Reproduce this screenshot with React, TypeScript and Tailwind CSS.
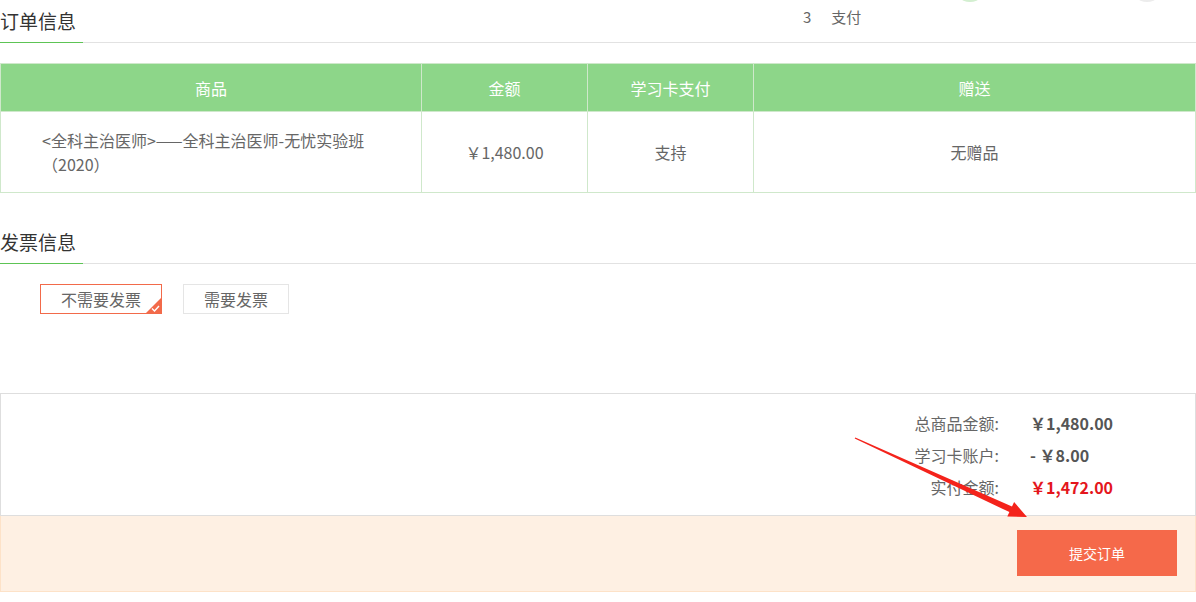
import React from "react";

const font = {
  fontFamily: '"Noto Sans CJK SC", "Noto Sans", "Liberation Sans", sans-serif',
};

const SectionTitle = ({ title }: { title: string }) => (
  <div className="h-[43px] border-b border-[#e2e2e2]">
    <span className="inline-block h-[43px] w-[83px] border-b border-[#5dc455] text-[19px] leading-[42px] text-[#333]">
      {title}
    </span>
  </div>
);

const SummaryRow = ({
  label,
  value,
  red,
}: {
  label: string;
  value: string;
  red?: boolean;
}) => (
  <div className="flex h-[32px] items-center justify-end">
    <span className="text-[16px] text-[#666]">{label}</span>
    <span
      className={`w-[196px] pl-[31px] text-[16px] font-bold ${
        red ? "text-[#e4161c]" : "text-[#555]"
      }`}
    >
      {value}
    </span>
  </div>
);

export default function App() {
  return (
    <div
      className="relative h-[602px] w-[1196px] overflow-hidden bg-white"
      style={font}
    >
      {/* step bar remnant */}
      <span className="absolute left-[953px] top-[-32px] h-[34px] w-[34px] rounded-full bg-[#d3efd0]" />
      <span className="absolute left-[1130px] top-[-32px] h-[34px] w-[34px] rounded-full bg-[#ececec]" />
      <div className="absolute left-[803px] top-[7px] flex gap-[20px] text-[15px] leading-[20px] text-[#666]">
        <span>3</span>
        <span>支付</span>
      </div>

      <SectionTitle title="订单信息" />

      <table className="mt-[20px] w-full border-collapse text-[16px]">
        <thead>
          <tr className="h-[48px] bg-[#8dd689] text-white">
            <th className="w-[421px] border border-[#cfe8cb] font-normal">商品</th>
            <th className="w-[166px] border border-[#cfe8cb] font-normal">金额</th>
            <th className="w-[166px] border border-[#cfe8cb] font-normal">学习卡支付</th>
            <th className="border border-[#cfe8cb] font-normal">赠送</th>
          </tr>
        </thead>
        <tbody>
          <tr className="h-[81px] text-[#666]">
            <td className="border border-[#cfe8cb] px-[41px] text-left leading-[24px]">
              &lt;全科主治医师&gt;——全科主治医师-无忧实验班（2020）
            </td>
            <td className="border border-[#cfe8cb] text-center">￥1,480.00</td>
            <td className="border border-[#cfe8cb] text-center">支持</td>
            <td className="border border-[#cfe8cb] text-center">无赠品</td>
          </tr>
        </tbody>
      </table>

      <div className="mt-[28px]">
        <SectionTitle title="发票信息" />
      </div>

      <div className="ml-[40px] mt-[20px] flex gap-[21px] text-[16px] text-[#666]">
        <button className="relative h-[30px] w-[122px] border border-[#f26a4a] bg-white">
          不需要发票
          <span className="absolute bottom-0 right-0 h-0 w-0 border-b-[15px] border-l-[15px] border-b-[#f26a4a] border-l-transparent" />
          <svg
            className="absolute bottom-[1px] right-[1px]"
            width="9"
            height="7"
            viewBox="0 0 9 7"
          >
            <path d="M1 3.5 L3.5 6 L8 1" stroke="white" strokeWidth="1.4" fill="none" />
          </svg>
        </button>
        <button className="h-[30px] w-[106px] border border-[#e5e5e5] bg-white">
          需要发票
        </button>
      </div>

      <div className="mt-[79px] border border-[#dedede] pb-[12px] pt-[13px]">
        <SummaryRow label="总商品金额:" value="￥1,480.00" />
        <SummaryRow label="学习卡账户:" value="- ￥8.00" />
        <SummaryRow label="实付金额:" value="￥1,472.00" red />
      </div>

      <div className="flex h-[76px] justify-end border border-t-0 border-[#fde2c8] bg-[#fef0e3] pr-[18px] pt-[14px]">
        <button className="h-[46px] w-[160px] bg-[#f5694a] text-[14px] text-white">
          提交订单
        </button>
      </div>

      {/* annotation arrow */}
      <svg className="pointer-events-none absolute left-0 top-0" width="1196" height="602">
        <polygon
          points="854.7,438.6 1009.4,512.1 1007.3,516.5 1027,517 1014.1,502.1 1012,506.5 855.3,437.4"
          fill="#f4231b"
        />
      </svg>
    </div>
  );
}
